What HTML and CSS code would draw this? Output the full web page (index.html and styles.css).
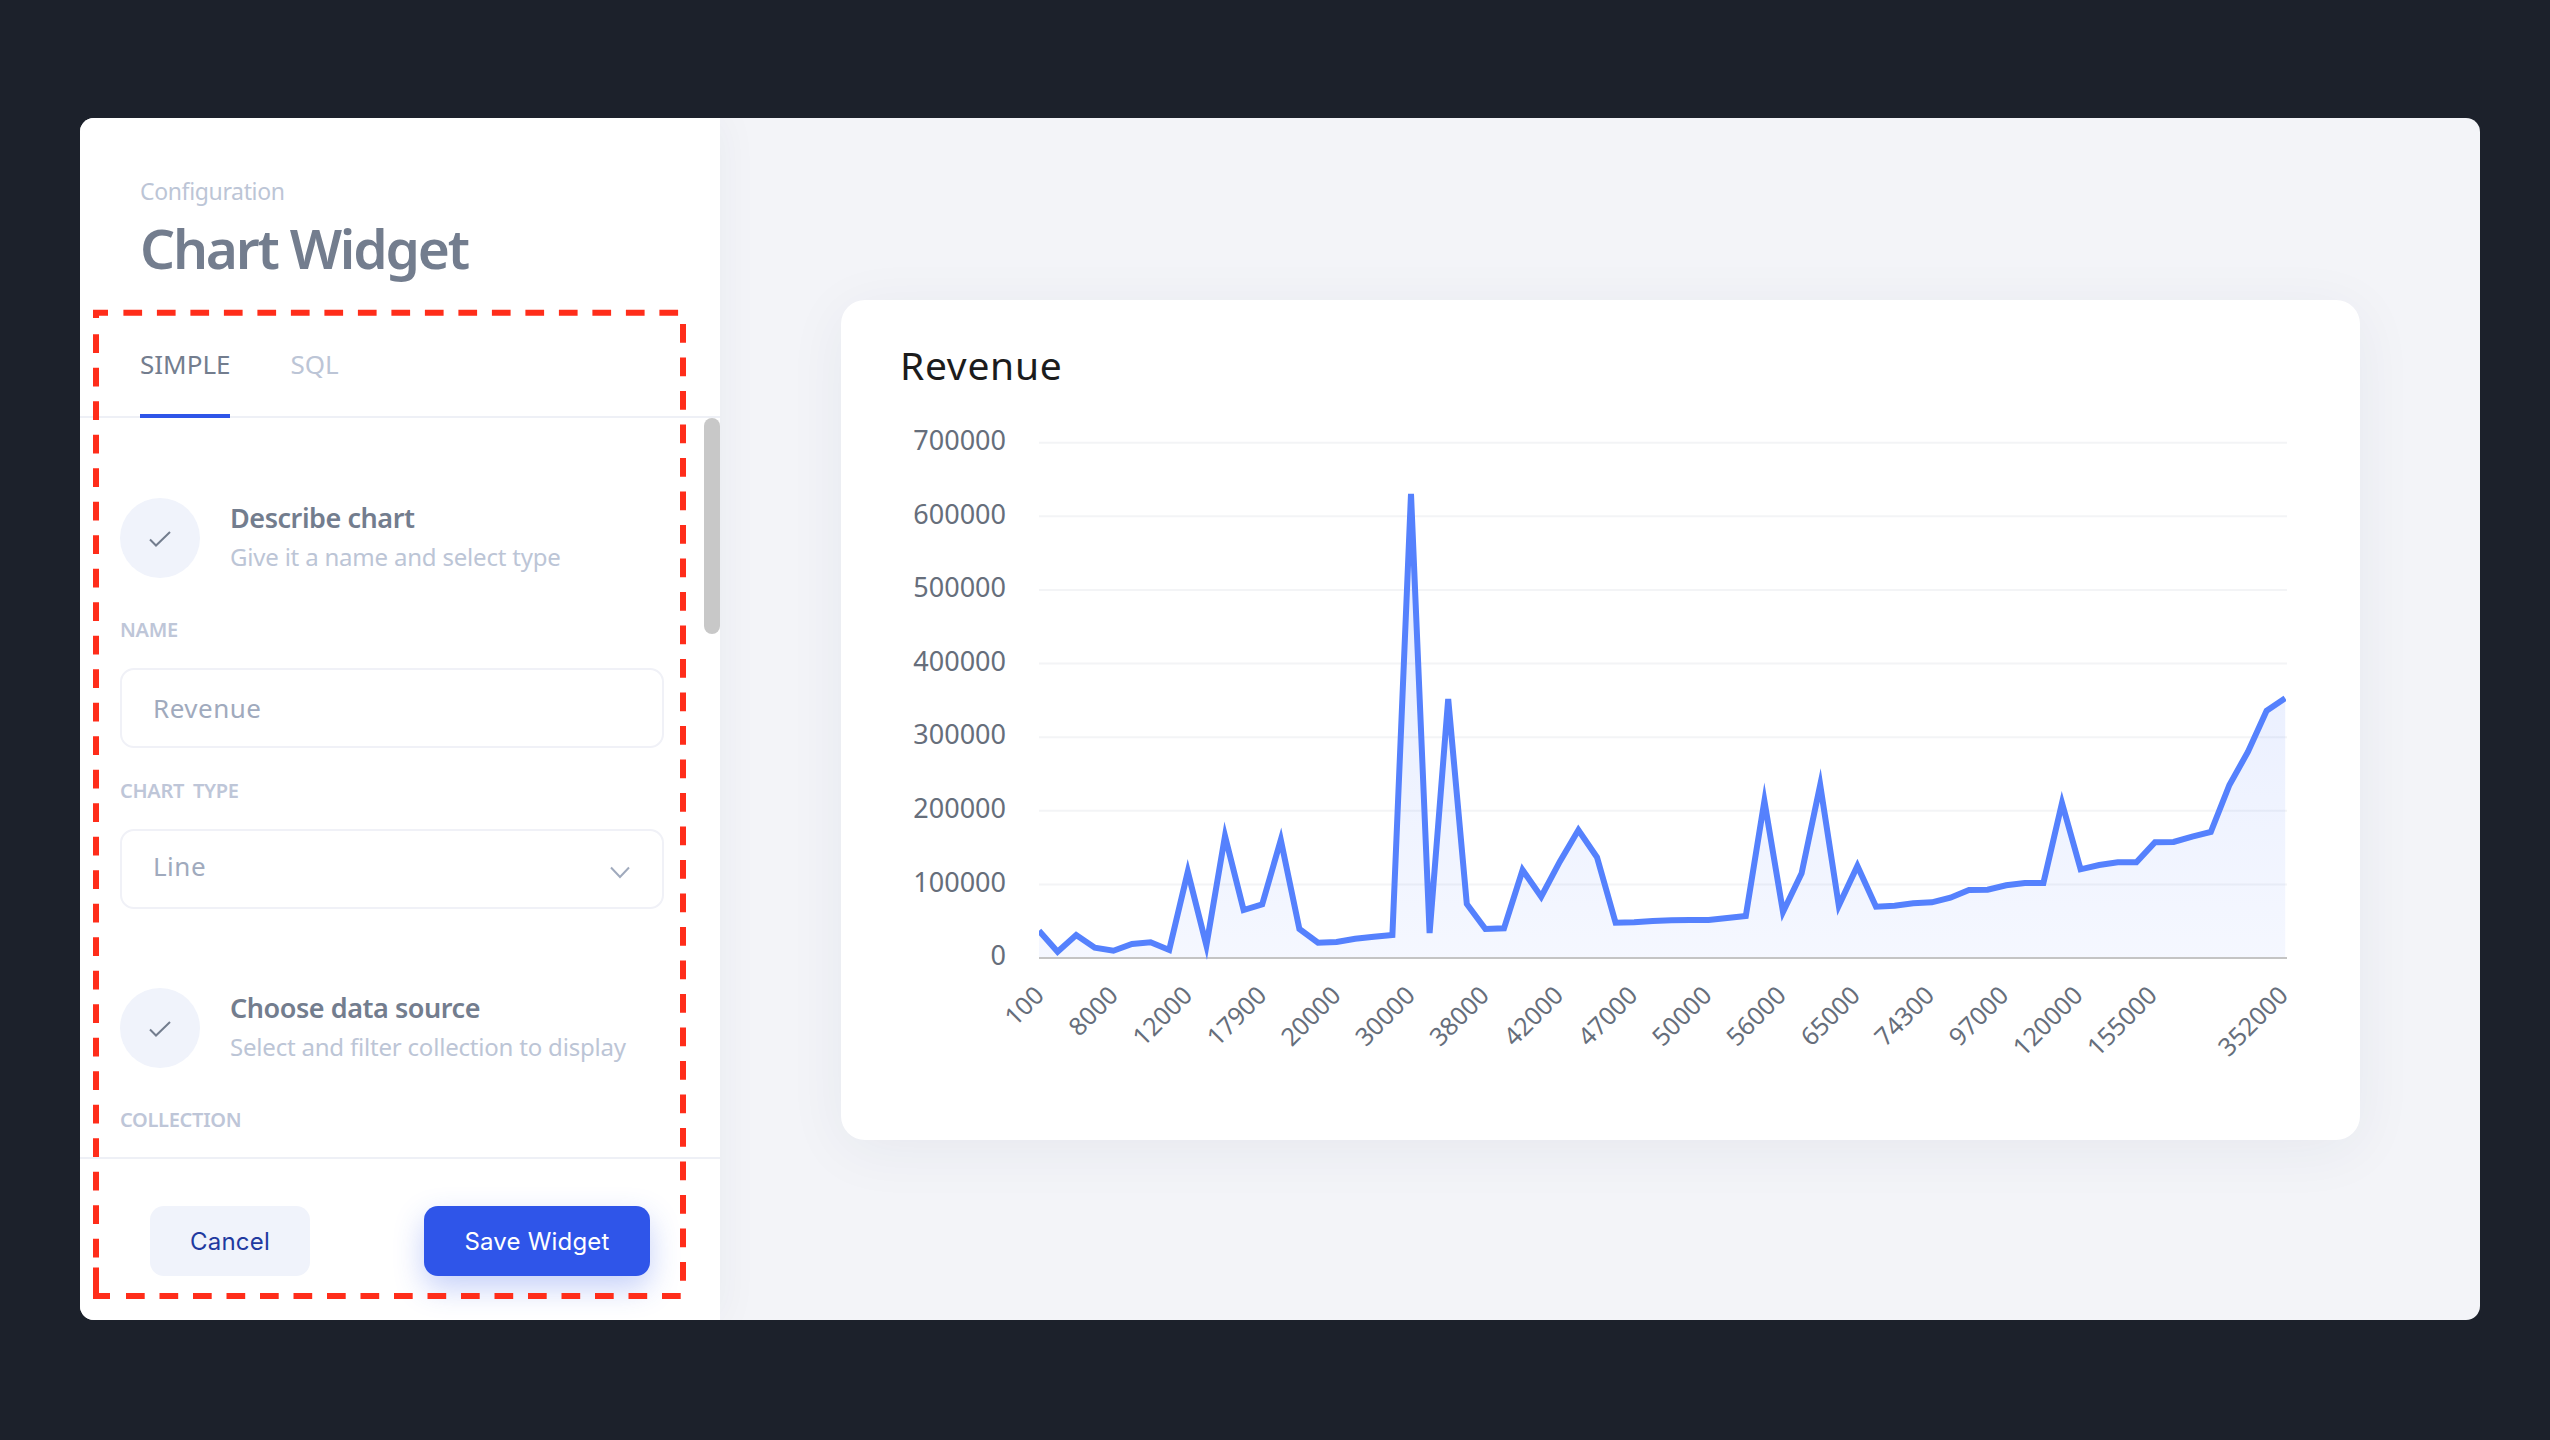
FILE: index.html
```html
<!DOCTYPE html>
<html lang="en">
<head>
<meta charset="utf-8">
<title>Chart Widget</title>
<link rel="stylesheet" href="styles.css">
</head>
<body>
<main class="frame">
  <aside class="sidebar">
    <header class="side-head">
      <div class="eyebrow">Configuration</div>
      <h1 class="side-title">Chart Widget</h1>
    </header>
    <nav class="tabs">
      <span class="tab tab-active">SIMPLE</span>
      <span class="tab">SQL</span>
    </nav>
    <div class="scroller">
      <div class="scroll-thumb"></div>
      <section class="step">
        <div class="step-dot"><svg class="check" viewBox="0 0 22 16"><path d="M1 8.5l6 6L21 1"/></svg></div>
        <div>
          <div class="step-title">Describe chart</div>
          <div class="step-sub">Give it a name and select type</div>
        </div>
      </section>
      <div class="field-label first">NAME</div>
      <div class="control">Revenue</div>
      <div class="field-label">CHART TYPE</div>
      <div class="control control-select">
        <span class="select-value">Line</span>
        <svg class="chevron" viewBox="0 0 20 13"><path d="M1 1.5l9 9.5 9-9.5"/></svg>
      </div>
      <section class="step step-second">
        <div class="step-dot"><svg class="check" viewBox="0 0 22 16"><path d="M1 8.5l6 6L21 1"/></svg></div>
        <div>
          <div class="step-title">Choose data source</div>
          <div class="step-sub">Select and filter collection to display</div>
        </div>
      </section>
      <div class="field-label first">COLLECTION</div>
    </div>
    <footer class="side-foot">
      <button class="btn btn-ghost">Cancel</button>
      <button class="btn btn-primary">Save Widget</button>
    </footer>
  </aside>
  <section class="stage">
    <article class="card">
      <h2 class="card-title">Revenue</h2>
      <svg class="chart" viewBox="900 420 1400 660" width="1400" height="660">
        <defs>
          <linearGradient id="areaFill" x1="0" y1="0" x2="0" y2="1">
            <stop offset="0" stop-color="#5580ff" stop-opacity="0.16"/>
            <stop offset="1" stop-color="#5580ff" stop-opacity="0.06"/>
          </linearGradient>
          <clipPath id="plotClip"><rect x="1039" y="470" width="1247" height="495"/></clipPath>
        </defs>
        <g class="grid">
          <path d="M1039 442.7H2287"/>
          <path d="M1039 516.3H2287"/>
          <path d="M1039 589.9H2287"/>
          <path d="M1039 663.5H2287"/>
          <path d="M1039 737.2H2287"/>
          <path d="M1039 810.8H2287"/>
          <path d="M1039 884.4H2287"/>
        </g>
        <g clip-path="url(#plotClip)">
          <path class="area" fill="url(#areaFill)" d="M1039 930.7L1057.6 951.7 1076.2 935 1094.8 947.7 1113.4 950.7 1132 944 1150.6 942.3 1169.2 950 1187.8 871.7 1206.4 945.5 1225 836 1243.6 910 1262.2 904.3 1280.8 840 1299.4 929 1318 942.7 1336.6 942 1355.2 938.7 1373.8 936.7 1392.4 935 1411 494 1429.6 933 1448.2 699 1466.8 904 1485.4 929 1504 928.3 1522.6 870 1541.2 896.7 1559.8 861.7 1578.4 830 1597 857.3 1615.6 922.7 1634.2 922.3 1652.8 921 1671.4 920.3 1690 920 1708.6 920 1727.2 918 1745.8 916 1764.4 801 1783 912 1801.6 873.3 1820.2 785 1838.8 905.6 1857.4 866 1876 906.7 1894.6 905.7 1913.2 903.3 1931.8 902.3 1950.4 897.7 1969 890 1987.6 889.7 2006.2 885.3 2024.8 883 2043.4 883 2062 803 2080.6 869.3 2099.2 865 2117.8 862.3 2136.4 862.3 2155 842.3 2173.6 842 2192.2 836.7 2210.8 832 2229.4 785 2248 751.7 2266.6 710.7 2285.2 698.3V958H1039Z"/>
        </g>
        <path class="axis" d="M1039 958H2287"/>
        <g clip-path="url(#plotClip)">
          <path class="line" d="M1039 930.7L1057.6 951.7 1076.2 935 1094.8 947.7 1113.4 950.7 1132 944 1150.6 942.3 1169.2 950 1187.8 871.7 1206.4 945.5 1225 836 1243.6 910 1262.2 904.3 1280.8 840 1299.4 929 1318 942.7 1336.6 942 1355.2 938.7 1373.8 936.7 1392.4 935 1411 494 1429.6 933 1448.2 699 1466.8 904 1485.4 929 1504 928.3 1522.6 870 1541.2 896.7 1559.8 861.7 1578.4 830 1597 857.3 1615.6 922.7 1634.2 922.3 1652.8 921 1671.4 920.3 1690 920 1708.6 920 1727.2 918 1745.8 916 1764.4 801 1783 912 1801.6 873.3 1820.2 785 1838.8 905.6 1857.4 866 1876 906.7 1894.6 905.7 1913.2 903.3 1931.8 902.3 1950.4 897.7 1969 890 1987.6 889.7 2006.2 885.3 2024.8 883 2043.4 883 2062 803 2080.6 869.3 2099.2 865 2117.8 862.3 2136.4 862.3 2155 842.3 2173.6 842 2192.2 836.7 2210.8 832 2229.4 785 2248 751.7 2266.6 710.7 2285.2 698.3"/>
        </g>
        <g class="y-labels">
          <text x="1006" y="450">700000</text>
          <text x="1006" y="523.5">600000</text>
          <text x="1006" y="597.1">500000</text>
          <text x="1006" y="670.7">400000</text>
          <text x="1006" y="744.3">300000</text>
          <text x="1006" y="817.9">200000</text>
          <text x="1006" y="891.5">100000</text>
          <text x="1006" y="965.1">0</text>
        </g>
        <g class="x-labels">
          <text transform="translate(1045.5 997) rotate(-45)">100</text>
          <text transform="translate(1119.7 997) rotate(-45)">8000</text>
          <text transform="translate(1193.9 997) rotate(-45)">12000</text>
          <text transform="translate(1268.1 997) rotate(-45)">17900</text>
          <text transform="translate(1342.3 997) rotate(-45)">20000</text>
          <text transform="translate(1416.5 997) rotate(-45)">30000</text>
          <text transform="translate(1490.7 997) rotate(-45)">38000</text>
          <text transform="translate(1564.9 997) rotate(-45)">42000</text>
          <text transform="translate(1639.1 997) rotate(-45)">47000</text>
          <text transform="translate(1713.3 997) rotate(-45)">50000</text>
          <text transform="translate(1787.5 997) rotate(-45)">56000</text>
          <text transform="translate(1861.7 997) rotate(-45)">65000</text>
          <text transform="translate(1935.9 997) rotate(-45)">74300</text>
          <text transform="translate(2010.1 997) rotate(-45)">97000</text>
          <text transform="translate(2084.3 997) rotate(-45)">120000</text>
          <text transform="translate(2158.5 997) rotate(-45)">155000</text>
          <text transform="translate(2289.5 997) rotate(-45)">352000</text>
        </g>
      </svg>
    </article>
  </section>
</main>
<svg class="annotation" viewBox="0 0 2550 1440" width="2550" height="1440">
  <path class="anno-corner" d="M108 312.7H96V318"/>
  <path class="anno-dash" d="M123.4 312.7H680"/>
  <path class="anno-dash" d="M683 324V1282"/>
  <path class="anno-dash" d="M96 334.3V1270"/>
  <path class="anno-corner" d="M96 1267.5V1296H110"/>
  <path class="anno-dash" d="M126 1296H682"/>
</svg>
</body>
</html>
```
FILE: styles.css
```css
* { box-sizing: border-box; }

html, body { margin: 0; height: 100%; }

body {
  position: relative;
  width: 2550px;
  height: 1440px;
  overflow: hidden;
  padding: 118px 70px 120px 80px;
  background: #1c212b;
  font-family: "Noto Sans", "Open Sans", sans-serif;
}

.frame {
  display: flex;
  width: 2400px;
  height: 1202px;
  border-radius: 14px;
  overflow: hidden;
  background: #f3f4f8;
}

/* Sidebar */
.sidebar {
  position: relative;
  z-index: 1;
  display: flex;
  flex-direction: column;
  flex: 0 0 640px;
  background: #fff;
  box-shadow: 0 0 40px rgba(40, 50, 80, 0.05);
}

.side-head {
  height: 192px;
  padding: 54px 0 0 60px;
}

.eyebrow {
  font-size: 23px;
  line-height: 38px;
  color: #bcc5d6;
  letter-spacing: -0.35px;
}

.side-title {
  margin: 0;
  font-size: 55px;
  line-height: 76px;
  font-weight: 600;
  color: #737d8e;
  letter-spacing: -2.2px;
}

.tabs {
  display: flex;
  gap: 60px;
  height: 108px;
  padding-left: 60px;
  border-bottom: 2px solid #eef0f6;
}

.tab {
  height: 108px;
  padding-top: 36px;
  font-size: 26px;
  line-height: 36px;
  color: #bcc5d6;
}

.tab-active {
  color: #737d8e;
  border-bottom: 4px solid #2e55e8;
}

.scroller {
  position: relative;
  flex: 1;
  min-height: 0;
  overflow: hidden;
  padding: 80px 56px 0 40px;
}

.scroll-thumb {
  position: absolute;
  top: 0;
  right: 0;
  width: 16px;
  height: 216px;
  border-radius: 8px;
  background: #c8c8c8;
}

.step {
  display: flex;
  gap: 30px;
  height: 80px;
}

.step-second { margin-top: 79px; }

.step-dot {
  display: flex;
  align-items: center;
  justify-content: center;
  flex: 0 0 80px;
  height: 80px;
  border-radius: 50%;
  background: #f0f3fb;
}

.check {
  width: 22px;
  height: 16px;
  margin-top: 2px;
  fill: none;
  stroke: #737d8e;
  stroke-width: 2;
}

.step-title {
  font-size: 27px;
  line-height: 40px;
  font-weight: 600;
  color: #737d8e;
  letter-spacing: -0.45px;
}

.step-sub {
  font-size: 24px;
  line-height: 38px;
  color: #bcc5d6;
  letter-spacing: -0.2px;
}

.field-label {
  margin-top: 31px;
  font-size: 20px;
  line-height: 24px;
  font-weight: 600;
  color: #bec6d8;
  letter-spacing: -0.3px;
  word-spacing: 4px;
}

.field-label.first { margin-top: 40px; }

.control {
  display: flex;
  align-items: center;
  height: 80px;
  margin-top: 26px;
  padding: 0 31px;
  border: 2px solid #f0f1f7;
  border-radius: 14px;
  font-size: 26px;
  color: #a0aabd;
  letter-spacing: 0.5px;
}

.control-select { justify-content: space-between; padding-right: 32px; }

.select-value { margin-top: -6px; }

.chevron {
  width: 20px;
  height: 13px;
  margin-top: 6px;
  fill: none;
  stroke: #a0aabd;
  stroke-width: 2;
}

.side-foot {
  display: flex;
  justify-content: space-between;
  align-items: flex-start;
  height: 163px;
  padding: 47px 70px 0;
  border-top: 2px solid #eef0f6;
}

.btn {
  height: 70px;
  border: 0;
  border-radius: 14px;
  font-family: Inter, "Liberation Sans", sans-serif;
  font-size: 24px;
  font-weight: 400;
  letter-spacing: 0.2px;
}

.btn-ghost {
  width: 160px;
  background: #f0f3fb;
  color: #1f3aa0;
}

.btn-primary {
  width: 226px;
  background: #2f55e9;
  color: #fff;
  box-shadow: 0 12px 30px rgba(47, 85, 233, 0.28);
}

/* Stage */
.stage {
  flex: 1;
  padding: 182px 120px 0 121px;
}

.card {
  height: 840px;
  padding: 40px 0 0 59px;
  border-radius: 24px;
  background: #fff;
  box-shadow: 0 10px 60px rgba(40, 50, 80, 0.06);
}

.card-title {
  margin: 0;
  height: 80px;
  font-size: 39px;
  line-height: 50px;
  font-weight: 400;
  color: #1c1c1c;
  letter-spacing: 0.7px;
}

.chart { display: block; overflow: visible; }

.grid path { fill: none; stroke: #f3f4f6; stroke-width: 2; }

.axis { fill: none; stroke: #c4c4c4; stroke-width: 2; }

.line {
  fill: none;
  stroke: #5581fd;
  stroke-width: 6;
  stroke-linejoin: miter;
  stroke-miterlimit: 10;
}

.y-labels text,
.x-labels text {
  fill: #666e7b;
  text-anchor: end;
}

.y-labels text { font-size: 27px; }

.x-labels text { font-size: 25px; }

/* Red dashed annotation */
.annotation {
  position: absolute;
  top: 0;
  left: 0;
  z-index: 2;
  pointer-events: none;
}

.anno-dash,
.anno-corner {
  fill: none;
  stroke: #ff2d1a;
  stroke-width: 6;
}

.anno-dash { stroke-dasharray: 18.7 14.8; }
```
